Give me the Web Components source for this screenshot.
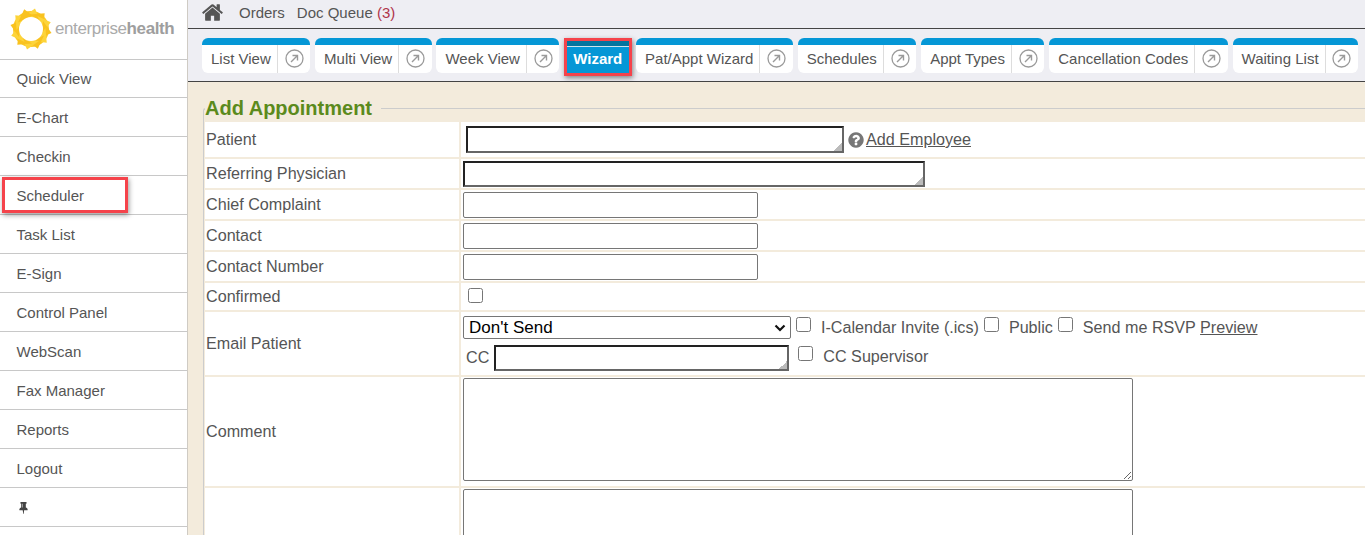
<!DOCTYPE html>
<html lang="en">
<head>
<meta charset="utf-8">
<title>Add Appointment</title>
<style>
  html, body { margin: 0; height: 100%; overflow: hidden; background: #f3ebdc; }
  body { font-family: "Liberation Sans", Arial, sans-serif; color: #555; }
  eh-shell { height: 535px; }
</style>
</head>
<body>
<eh-shell>
  <eh-sidebar slot="side">
    <eh-nav-item>Quick View</eh-nav-item>
    <eh-nav-item>E-Chart</eh-nav-item>
    <eh-nav-item>Checkin</eh-nav-item>
    <eh-nav-item highlight>Scheduler</eh-nav-item>
    <eh-nav-item>Task List</eh-nav-item>
    <eh-nav-item>E-Sign</eh-nav-item>
    <eh-nav-item>Control Panel</eh-nav-item>
    <eh-nav-item>WebScan</eh-nav-item>
    <eh-nav-item>Fax Manager</eh-nav-item>
    <eh-nav-item>Reports</eh-nav-item>
    <eh-nav-item>Logout</eh-nav-item>
    <eh-nav-item pin></eh-nav-item>
  </eh-sidebar>

  <eh-topbar slot="top"></eh-topbar>

  <eh-tabbar slot="top">
    <eh-tab>List View</eh-tab>
    <eh-tab>Multi View</eh-tab>
    <eh-tab>Week View</eh-tab>
    <eh-tab active>Wizard</eh-tab>
    <eh-tab>Pat/Appt Wizard</eh-tab>
    <eh-tab>Schedules</eh-tab>
    <eh-tab>Appt Types</eh-tab>
    <eh-tab>Cancellation Codes</eh-tab>
    <eh-tab>Waiting List</eh-tab>
  </eh-tabbar>

  <eh-form-panel heading="Add Appointment">
    <eh-row label="Patient" pad="4px 0 4px 5px">
      <eh-lookup width="378" height="27"></eh-lookup>
      <eh-help>Add Employee</eh-help>
    </eh-row>
    <eh-row label="Referring Physician">
      <eh-lookup width="462" height="26"></eh-lookup>
    </eh-row>
    <eh-row label="Chief Complaint"><eh-field></eh-field></eh-row>
    <eh-row label="Contact"><eh-field></eh-field></eh-row>
    <eh-row label="Contact Number"><eh-field></eh-field></eh-row>
    <eh-row label="Confirmed" pad="5px 0 7px 7px"><eh-check></eh-check></eh-row>
    <eh-row label="Email Patient" pad="4px 0 4px 2px">
      <eh-email-options></eh-email-options>
    </eh-row>
    <eh-row label="Comment" pad="1px 0 1px 2px"><eh-note height="103"></eh-note></eh-row>
    <eh-row label="" pad="1px 0 1px 2px"><eh-note height="103"></eh-note></eh-row>
  </eh-form-panel>
</eh-shell>

<script>
const ICONS = {
  home: 'M1472 992v480q0 26-19 45t-45 19h-384v-384h-256v384h-384q-26 0-45-19t-19-45v-480q0-1 .5-3t.5-3l575-474 575 474q1 2 1 6zm223-69l-62 74q-8 9-21 11h-3q-13 0-21-7l-692-577-692 577q-12 8-24 7-13-2-21-11l-62-74q-8-10-7-23.500t11-21.500l719-599q32-26 76-26t76 26l244 204v-195q0-14 9-23t23-9h192q14 0 23 9t9 23v408l219 182q10 8 11 21.500t-7 23.500z',
  pin: 'M800 864v-448q0-14-9-23t-23-9-23 9-9 23v448q0 14 9 23t23 9 23-9 9-23zm672 352q0 26-19 45t-45 19h-429l-51 483q-2 12-10.500 20.500t-20.500 8.500h-1q-27 0-32-27l-76-485h-404q-26 0-45-19t-19-45q0-123 78.500-221.500t177.500-98.500v-512q-52 0-90-38t-38-90 38-90 90-38h640q52 0 90 38t38 90-38 90-90 38v512q99 0 177.500 98.500t78.500 221.500z',
  help: 'M1024 1376v-192q0-14-9-23t-23-9h-192q-14 0-23 9t-9 23v192q0 14 9 23t23 9h192q14 0 23-9t9-23zm256-672q0-88-55.500-163t-138.500-116-170-41q-243 0-371 213-15 24 8 42l132 100q7 6 19 6 16 0 25-12 53-68 86-92 34-24 86-24 48 0 85.500 26t37.500 59q0 38-20 61t-68 45q-63 28-115.500 86.500t-52.500 125.500v36q0 14 9 23t23 9h192q14 0 23-9t9-23q0-19 21.500-49.500t54.500-49.500q32-18 49-28.500t46-35 44.500-48 28-60.500 12.500-81zm384 192q0 209-103 385.500t-279.500 279.500-385.500 103-385.500-103-279.500-279.500-103-385.500 103-385.500 279.500-279.500 385.500-103 385.500 103 279.500 279.500 103 385.500z'
};

const CHEVRON = "data:image/svg+xml,%3Csvg xmlns='http://www.w3.org/2000/svg' width='12' height='8'%3E%3Cpath d='M1.500 1.500 L6 6 L10.500 1.500' fill='none' stroke='%23111' stroke-width='2.200'/%3E%3C/svg%3E";

const faIcon = (name, size, color) =>
  `<svg width="${size}" height="${size}" viewBox="0 0 1792 1792" fill="${color}" aria-hidden="true"><path d="${ICONS[name]}"/></svg>`;

class EhShell extends HTMLElement {
  constructor() {
    super();
    this.attachShadow({ mode: 'open' });
    this.shadowRoot.innerHTML = `
      <style>
        :host { display: flex; width: 100%; overflow: hidden; }
        .main { flex: 1; min-width: 0; display: flex; flex-direction: column; }
      </style>
      <slot name="side"></slot>
      <div class="main">
        <slot name="top"></slot>
        <slot></slot>
      </div>
    `;
  }
}

class EhSidebar extends HTMLElement {
  constructor() {
    super();
    this.attachShadow({ mode: 'open' });
    const petals = Array.from({ length: 12 }, (_, i) => {
      const fill = i % 2 ? '#f9c21f' : '#fdd43a';
      return `<polygon points="-8,-12 4,-20.500 8,-11" fill="${fill}" transform="rotate(${i * 30})"/>`;
    }).join('');
    this.shadowRoot.innerHTML = `
      <style>
        :host {
          display: block;
          flex: none;
          width: 187px;
          height: 535px;
          background: #fff;
          border-right: 1px solid #cfcbc4;
          font-size: 15px;
        }
        .logo {
          height: 59px;
          border-bottom: 1px solid #c8c8c8;
          display: flex;
          align-items: center;
          padding-left: 10px;
        }
        .logo svg { flex: none; margin-top: -2px; }
        .word {
          margin: -1px 0 0 3px;
          font-size: 17px;
          letter-spacing: -0.4px;
          color: #aaa;
          white-space: nowrap;
        }
        .word b { color: #9e9e9e; }
      </style>
      <div class="logo">
        <svg width="42" height="42" viewBox="-21 -21 42 42" aria-hidden="true">
          <circle r="18" fill="#fbc925"/>${petals}<circle r="12" fill="#fff"/>
        </svg>
        <span class="word">enterprise<b>health</b></span>
      </div>
      <slot></slot>
    `;
  }
}

class EhNavItem extends HTMLElement {
  constructor() {
    super();
    this.attachShadow({ mode: 'open' });
  }

  connectedCallback() {
    const first = !this.previousElementSibling;
    const mark = this.hasAttribute('highlight') ? '<span class="mark"></span>' : '';
    const body = this.hasAttribute('pin') ? faIcon('pin', 13, '#444') : '<slot></slot>';
    this.shadowRoot.innerHTML = `
      <style>
        :host {
          display: flex;
          align-items: center;
          position: relative;
          box-sizing: border-box;
          height: ${first ? 38 : 39}px;
          padding: 0 0 ${first ? 1 : 0}px 16.500px;
          border-bottom: 1px solid #c8c8c8;
          color: #555;
        }
        .mark {
          position: absolute;
          left: 2px;
          top: 1px;
          width: 120px;
          height: 30px;
          border: 3px solid #f5434b;
          box-shadow: 1px 2px 5px rgba(0, 0, 0, 0.4);
        }
      </style>
      ${mark}${body}
    `;
  }
}

class EhTopbar extends HTMLElement {
  constructor() {
    super();
    this.attachShadow({ mode: 'open' });
    this.shadowRoot.innerHTML = `
      <style>
        :host {
          display: flex;
          flex: none;
          align-items: center;
          box-sizing: border-box;
          height: 29px;
          padding: 0 0 3px 13px;
          background: #eeeef3;
          border-bottom: 1px solid #444;
          font-size: 15px;
          color: #555;
        }
        svg { margin-right: 15px; flex: none; }
        .link { margin-right: 12px; }
        .count { color: #b0354a; }
      </style>
      ${faIcon('home', 23, '#555')}
      <span class="link">Orders</span>
      <span class="link">Doc Queue <span class="count">(3)</span></span>
    `;
  }
}

class EhTabbar extends HTMLElement {
  constructor() {
    super();
    this.attachShadow({ mode: 'open' });
    this.shadowRoot.innerHTML = `
      <style>
        :host {
          display: flex;
          flex: none;
          gap: 4.800px;
          box-sizing: border-box;
          height: 53px;
          padding: 9px 0 0 14px;
          background: #eeeef3;
          border-bottom: 1px solid #444;
          font-size: 15px;
          white-space: nowrap;
        }
      </style>
      <slot></slot>
    `;
  }
}

class EhTab extends HTMLElement {
  constructor() {
    super();
    this.attachShadow({ mode: 'open' });
  }

  connectedCallback() {
    if (this.hasAttribute('active')) {
      this.shadowRoot.innerHTML = `
        <style>
          :host {
            display: flex;
            align-items: center;
            box-sizing: border-box;
            height: 38px;
            padding: 3px 7px 0 6px;
            margin-right: -1px;
            border: 3px solid #f5434b;
            background: linear-gradient(#04759f 5px, #cfe3ea 5px, #cfe3ea 6px, #0597d6 6px);
            box-shadow: 1px 2px 5px rgba(0, 0, 0, 0.45);
            color: #fff;
            font-weight: bold;
          }
        </style>
        <slot></slot>
      `;
      return;
    }
    this.shadowRoot.innerHTML = `
      <style>
        :host {
          display: flex;
          box-sizing: border-box;
          height: 35px;
          background: #fff;
          border-top: 7px solid #0597d6;
          border-radius: 6px;
          color: #555;
        }
        .text { display: flex; align-items: center; padding: 0 6px 2px 9px; }
        .open {
          display: flex;
          align-items: center;
          justify-content: center;
          width: 32.500px;
          padding-bottom: 2px;
          border-left: 1px solid #ddd;
        }
      </style>
      <span class="text"><slot></slot></span>
      <span class="open">
        <svg width="19" height="19" viewBox="0 0 19 19" fill="none" stroke="#9a9a9a" aria-hidden="true">
          <circle cx="9.500" cy="9.500" r="8.500" stroke-width="1.300"/>
          <path d="M6 13 L12.500 6.500 M7.500 6.500 H12.500 V11.500" stroke-width="1.400"/>
        </svg>
      </span>
    `;
  }
}

class EhFormPanel extends HTMLElement {
  constructor() {
    super();
    this.attachShadow({ mode: 'open' });
  }

  connectedCallback() {
    this.shadowRoot.innerHTML = `
      <style>
        :host { display: block; flex: none; background: #f3ebdc; padding: 15px 0 0 15px; }
        fieldset {
          margin: 0;
          padding: 2px 0 0 1px;
          border: 0;
          border-top: 1px solid #ccc;
          border-left: 1px solid #ccc;
          border-top-left-radius: 3px;
          min-width: 0;
        }
        legend {
          padding: 0 9px 0 0;
          font-size: 20px;
          font-weight: bold;
          line-height: 23px;
          color: #5b8a1c;
        }
      </style>
      <fieldset>
        <legend>${this.getAttribute('heading')}</legend>
        <slot></slot>
      </fieldset>
    `;
  }
}

class EhRow extends HTMLElement {
  constructor() {
    super();
    this.attachShadow({ mode: 'open' });
  }

  connectedCallback() {
    const pad = this.getAttribute('pad') || '2px 0 1px 2px';
    this.shadowRoot.innerHTML = `
      <style>
        :host {
          display: grid;
          grid-template-columns: 254px 1fr;
          gap: 2px;
          margin-bottom: 2px;
          font-size: 16.150px;
          color: #555;
        }
        .label, .value { background: #fff; }
        .label { display: flex; align-items: center; padding-left: 1px; }
        .value {
          display: flex;
          align-items: center;
          padding: ${pad};
          min-width: 0;
        }
      </style>
      <div class="label">${this.getAttribute('label')}</div>
      <div class="value"><slot></slot></div>
    `;
  }
}

class EhLookup extends HTMLElement {
  constructor() {
    super();
    this.attachShadow({ mode: 'open' });
  }

  connectedCallback() {
    this.shadowRoot.innerHTML = `
      <style>
        :host { display: block; flex: none; line-height: 0; }
        input {
          box-sizing: border-box;
          width: ${this.getAttribute('width')}px;
          height: ${this.getAttribute('height')}px;
          margin: 0;
          padding: 0 4px;
          border: 2px solid;
          border-color: #222 #666 #666 #222;
          border-radius: 0;
          outline: 0;
          background: #fff linear-gradient(135deg, transparent 50%, #bbb 50%) no-repeat right bottom / 8px 8px;
        }
      </style>
      <input type="text">
    `;
  }
}

class EhField extends HTMLElement {
  constructor() {
    super();
    this.attachShadow({ mode: 'open' });
    this.shadowRoot.innerHTML = `
      <style>
        :host { display: block; line-height: 0; }
        input {
          box-sizing: border-box;
          width: 295px;
          height: 26px;
          margin: 0;
          border: 1px solid #767676;
          border-radius: 2px;
        }
      </style>
      <input type="text">
    `;
  }
}

class EhCheck extends HTMLElement {
  constructor() {
    super();
    this.attachShadow({ mode: 'open' });
    this.shadowRoot.innerHTML = `
      <style>
        :host { display: block; flex: none; line-height: 0; }
        input { width: 15px; height: 15px; margin: 0; }
      </style>
      <input type="checkbox">
    `;
  }
}

class EhNote extends HTMLElement {
  constructor() {
    super();
    this.attachShadow({ mode: 'open' });
  }

  connectedCallback() {
    this.shadowRoot.innerHTML = `
      <style>
        :host { display: block; line-height: 0; }
        textarea {
          box-sizing: border-box;
          width: 670px;
          height: ${this.getAttribute('height')}px;
          margin: 0 0 4px;
          border: 1px solid #767676;
          border-radius: 2px;
        }
      </style>
      <textarea></textarea>
    `;
  }
}

class EhHelp extends HTMLElement {
  constructor() {
    super();
    this.attachShadow({ mode: 'open' });
    this.shadowRoot.innerHTML = `
      <style>
        :host { display: flex; align-items: center; margin-left: 3px; }
        a { color: #555; text-decoration: underline; }
        svg { flex: none; margin-right: 1px; }
      </style>
      ${faIcon('help', 18, '#777')}
      <a href="#"><slot></slot></a>
    `;
  }
}

class EhEmailOptions extends HTMLElement {
  constructor() {
    super();
    this.attachShadow({ mode: 'open' });
    this.shadowRoot.innerHTML = `
      <style>
        :host { display: block; }
        .line { display: flex; align-items: flex-start; white-space: nowrap; }
        .line + .line { margin-top: 6px; padding-left: 3px; }
        select {
          appearance: none;
          box-sizing: border-box;
          width: 328px;
          height: 23px;
          margin: 0 5px 0 0;
          padding: 0 0 0 5px;
          border: 1px solid #767676;
          border-radius: 2px;
          background: #fff url("${CHEVRON}") no-repeat right 4px center;
          font: 17px "Liberation Sans", Arial, sans-serif;
          color: #000;
        }
        eh-check { margin-top: 1px; }
        .text { margin: 2px 5px 0 10px; }
        a { color: #555; }
        .cc { margin: 3px 5px 0 0; }
        eh-lookup { margin-right: 9px; }
      </style>
      <div class="line">
        <select><option>Don't Send</option></select>
        <eh-check></eh-check><span class="text">I-Calendar Invite (.ics)</span>
        <eh-check></eh-check><span class="text">Public</span>
        <eh-check></eh-check><span class="text">Send me RSVP <a href="#">Preview</a></span>
      </div>
      <div class="line">
        <span class="cc">CC</span>
        <eh-lookup width="295" height="26"></eh-lookup>
        <eh-check></eh-check><span class="text">CC Supervisor</span>
      </div>
    `;
  }
}

customElements.define('eh-shell', EhShell);
customElements.define('eh-sidebar', EhSidebar);
customElements.define('eh-nav-item', EhNavItem);
customElements.define('eh-topbar', EhTopbar);
customElements.define('eh-tabbar', EhTabbar);
customElements.define('eh-tab', EhTab);
customElements.define('eh-form-panel', EhFormPanel);
customElements.define('eh-row', EhRow);
customElements.define('eh-lookup', EhLookup);
customElements.define('eh-field', EhField);
customElements.define('eh-check', EhCheck);
customElements.define('eh-note', EhNote);
customElements.define('eh-help', EhHelp);
customElements.define('eh-email-options', EhEmailOptions);
</script>
</body>
</html>
